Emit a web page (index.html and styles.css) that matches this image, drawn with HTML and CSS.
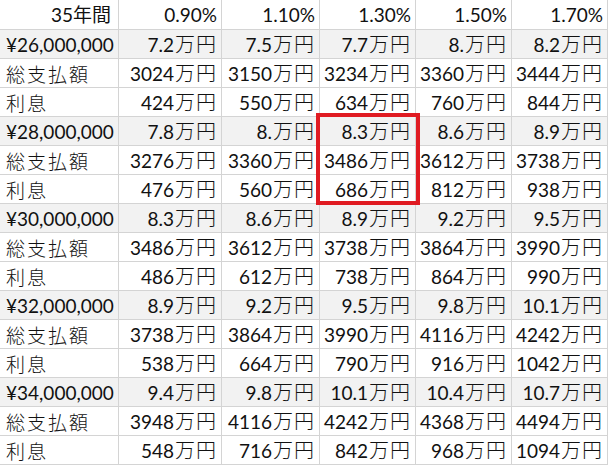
FILE: index.html
```html
<!DOCTYPE html>
<html lang="ja">
<head>
<meta charset="utf-8">
<title>35年間 返済表</title>
<link rel="stylesheet" href="styles.css">
</head>
<body>
<div class="sheet">
  <div class="grid">
    <div class="c h">35年間</div><div class="c">0.90%</div><div class="c">1.10%</div><div class="c">1.30%</div><div class="c">1.50%</div><div class="c">1.70%</div>

    <div class="c l g">¥26,000,000</div><div class="c g">7.2<span class="u">万円</span></div><div class="c g">7.5<span class="u">万円</span></div><div class="c g">7.7<span class="u">万円</span></div><div class="c g">8.<span class="u">万円</span></div><div class="c g">8.2<span class="u">万円</span></div>
    <div class="c l k">総支払額</div><div class="c">3024<span class="u">万円</span></div><div class="c">3150<span class="u">万円</span></div><div class="c">3234<span class="u">万円</span></div><div class="c">3360<span class="u">万円</span></div><div class="c">3444<span class="u">万円</span></div>
    <div class="c l k">利息</div><div class="c">424<span class="u">万円</span></div><div class="c">550<span class="u">万円</span></div><div class="c">634<span class="u">万円</span></div><div class="c">760<span class="u">万円</span></div><div class="c">844<span class="u">万円</span></div>

    <div class="c l g">¥28,000,000</div><div class="c g">7.8<span class="u">万円</span></div><div class="c g">8.<span class="u">万円</span></div><div class="c g">8.3<span class="u">万円</span></div><div class="c g">8.6<span class="u">万円</span></div><div class="c g">8.9<span class="u">万円</span></div>
    <div class="c l k">総支払額</div><div class="c">3276<span class="u">万円</span></div><div class="c">3360<span class="u">万円</span></div><div class="c">3486<span class="u">万円</span></div><div class="c">3612<span class="u">万円</span></div><div class="c">3738<span class="u">万円</span></div>
    <div class="c l k">利息</div><div class="c">476<span class="u">万円</span></div><div class="c">560<span class="u">万円</span></div><div class="c">686<span class="u">万円</span></div><div class="c">812<span class="u">万円</span></div><div class="c">938<span class="u">万円</span></div>

    <div class="c l g">¥30,000,000</div><div class="c g">8.3<span class="u">万円</span></div><div class="c g">8.6<span class="u">万円</span></div><div class="c g">8.9<span class="u">万円</span></div><div class="c g">9.2<span class="u">万円</span></div><div class="c g">9.5<span class="u">万円</span></div>
    <div class="c l k">総支払額</div><div class="c">3486<span class="u">万円</span></div><div class="c">3612<span class="u">万円</span></div><div class="c">3738<span class="u">万円</span></div><div class="c">3864<span class="u">万円</span></div><div class="c">3990<span class="u">万円</span></div>
    <div class="c l k">利息</div><div class="c">486<span class="u">万円</span></div><div class="c">612<span class="u">万円</span></div><div class="c">738<span class="u">万円</span></div><div class="c">864<span class="u">万円</span></div><div class="c">990<span class="u">万円</span></div>

    <div class="c l g">¥32,000,000</div><div class="c g">8.9<span class="u">万円</span></div><div class="c g">9.2<span class="u">万円</span></div><div class="c g">9.5<span class="u">万円</span></div><div class="c g">9.8<span class="u">万円</span></div><div class="c g">10.1<span class="u">万円</span></div>
    <div class="c l k">総支払額</div><div class="c">3738<span class="u">万円</span></div><div class="c">3864<span class="u">万円</span></div><div class="c">3990<span class="u">万円</span></div><div class="c">4116<span class="u">万円</span></div><div class="c">4242<span class="u">万円</span></div>
    <div class="c l k">利息</div><div class="c">538<span class="u">万円</span></div><div class="c">664<span class="u">万円</span></div><div class="c">790<span class="u">万円</span></div><div class="c">916<span class="u">万円</span></div><div class="c">1042<span class="u">万円</span></div>

    <div class="c l g">¥34,000,000</div><div class="c g">9.4<span class="u">万円</span></div><div class="c g">9.8<span class="u">万円</span></div><div class="c g">10.1<span class="u">万円</span></div><div class="c g">10.4<span class="u">万円</span></div><div class="c g">10.7<span class="u">万円</span></div>
    <div class="c l k">総支払額</div><div class="c">3948<span class="u">万円</span></div><div class="c">4116<span class="u">万円</span></div><div class="c">4242<span class="u">万円</span></div><div class="c">4368<span class="u">万円</span></div><div class="c">4494<span class="u">万円</span></div>
    <div class="c l k">利息</div><div class="c">548<span class="u">万円</span></div><div class="c">716<span class="u">万円</span></div><div class="c">842<span class="u">万円</span></div><div class="c">968<span class="u">万円</span></div><div class="c">1094<span class="u">万円</span></div>
  </div>
  <div class="mark"></div>
</div>
</body>
</html>
```

FILE: styles.css
```css
html, body {
  margin: 0;
  padding: 0;
  background: #ffffff;
}

.sheet {
  position: relative;
  width: 609px;
  height: 465px;
  overflow: hidden;
  background: #ffffff;
}

.grid {
  display: grid;
  grid-template-columns: 118px 102px 97px 95px 95px 95px;
  grid-template-rows: 29px repeat(15, 28px);
  gap: 1px;
  width: 607px;
  padding: 0 1px 1px 0;
  background: #d4d4d4;
  font-family: "Lato", "Noto Sans CJK JP", sans-serif;
  font-size: 19px;
  color: #111111;
}

.c {
  background: #ffffff;
  display: flex;
  align-items: center;
  justify-content: flex-end;
  padding: 0 4px 0 0;
  white-space: nowrap;
  line-height: 1;
}

.c.g {
  background: #f2f2f2;
}

.c.l {
  justify-content: flex-start;
  padding: 0 0 0 6px;
}

.c.h {
  padding-right: 7px;
}

.k {
  font-family: "Noto Sans CJK JP", sans-serif;
  font-weight: 300;
  letter-spacing: 2px;
}

.u {
  font-family: "Noto Sans CJK JP", sans-serif;
  font-weight: 300;
  font-size: 20px;
  letter-spacing: 1px;
  margin-left: 1px;
}

.mark {
  position: absolute;
  left: 316px;
  top: 113px;
  width: 104px;
  height: 92px;
  box-sizing: border-box;
  border: 4px solid #e01b22;
}
```
